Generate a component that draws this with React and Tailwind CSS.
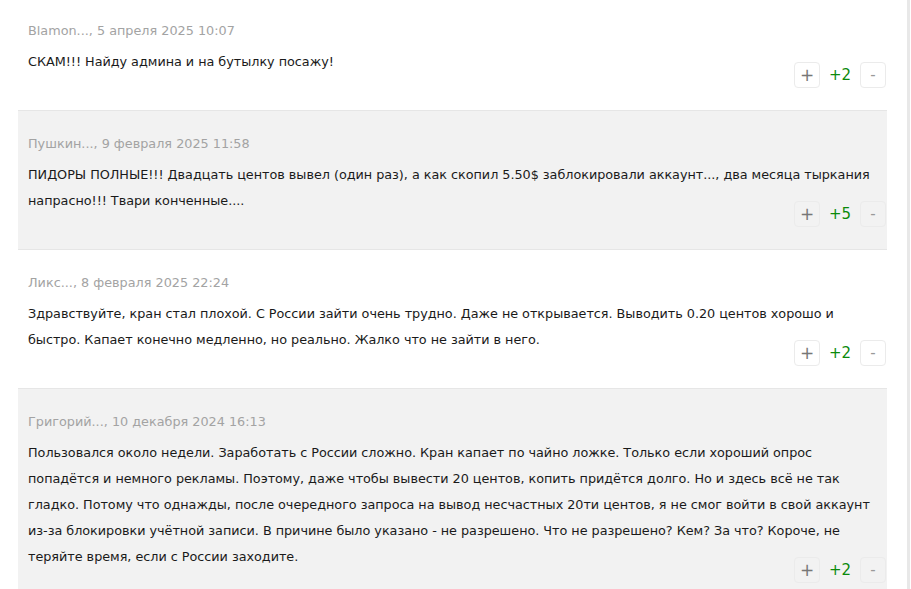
import React from "react";

const comments = [
  {
    head: "Blamon..., 5 апреля 2025 10:07",
    lines: ["СКАМ!!! Найду админа и на бутылку посажу!"],
    score: "+2",
    gray: false,
  },
  {
    head: "Пушкин..., 9 февраля 2025 11:58",
    lines: [
      "ПИДОРЫ ПОЛНЫЕ!!! Двадцать центов вывел (один раз), а как скопил 5.50$ заблокировали аккаунт..., два месяца тыркания",
      "напрасно!!! Твари конченные....",
    ],
    score: "+5",
    gray: true,
  },
  {
    head: "Ликс..., 8 февраля 2025 22:24",
    lines: [
      "Здравствуйте, кран стал плохой. С России зайти очень трудно. Даже не открывается. Выводить 0.20 центов хорошо и",
      "быстро. Капает конечно медленно, но реально. Жалко что не зайти в него.",
    ],
    score: "+2",
    gray: false,
  },
  {
    head: "Григорий..., 10 декабря 2024 16:13",
    lines: [
      "Пользовался около недели. Заработать с России сложно. Кран капает по чайно ложке. Только если хороший опрос",
      "попадётся и немного рекламы. Поэтому, даже чтобы вывести 20 центов, копить придётся долго. Но и здесь всё не так",
      "гладко. Потому что однажды, после очередного запроса на вывод несчастных 20ти центов, я не смог войти в свой аккаунт",
      "из-за блокировки учётной записи. В причине было указано - не разрешено. Что не разрешено? Кем? За что? Короче, не",
      "теряйте время, если с России заходите.",
    ],
    score: "+2",
    gray: true,
  },
];

function Comment({ c }) {
  return (
    <div
      className={
        "border-b border-[#e6e6e6] pl-[10px] pr-[1px] pt-[20px] pb-[22px] " +
        (c.gray ? "bg-[#f2f2f2]" : "bg-white")
      }
    >
      <div className="text-[12.8px] leading-[26px] text-[#a3a3a3] mb-[5px]">{c.head}</div>
      <div className="text-[12.8px] leading-[26px] text-[#1a1a1a] tracking-[-0.03px]">
        {c.lines.map((l, i) => (
          <div key={i} className="whitespace-nowrap">
            {l}
          </div>
        ))}
      </div>
      <div className="flex justify-end items-center -mt-[13px] h-[26px]">
        <button className="w-[26px] h-[26px] rounded-[4px] border border-[#ebebeb] flex items-center justify-center text-[#777] text-[17px] leading-none">
          +
        </button>
        <span className="w-[40px] text-center text-[15px] text-[#0b8a0b]">{c.score}</span>
        <button className="w-[26px] h-[26px] rounded-[4px] border border-[#ebebeb] flex items-center justify-center text-[#999] text-[15px] leading-none">
          -
        </button>
      </div>
    </div>
  );
}

export default function App() {
  return (
    <div
      className="w-[911px] h-[589px] overflow-hidden bg-white flex"
      style={{ fontFamily: "Verdana, 'DejaVu Sans', sans-serif" }}
    >
      <div className="flex-none w-[18px]" />
      <div className="w-[869px] -mt-[2px] flex flex-col">
        {comments.map((c, i) => (
          <Comment key={i} c={c} />
        ))}
      </div>
      <div className="w-[20px]" />
      <div className="w-[3px] bg-[#e8e8e8]" />
    </div>
  );
}
